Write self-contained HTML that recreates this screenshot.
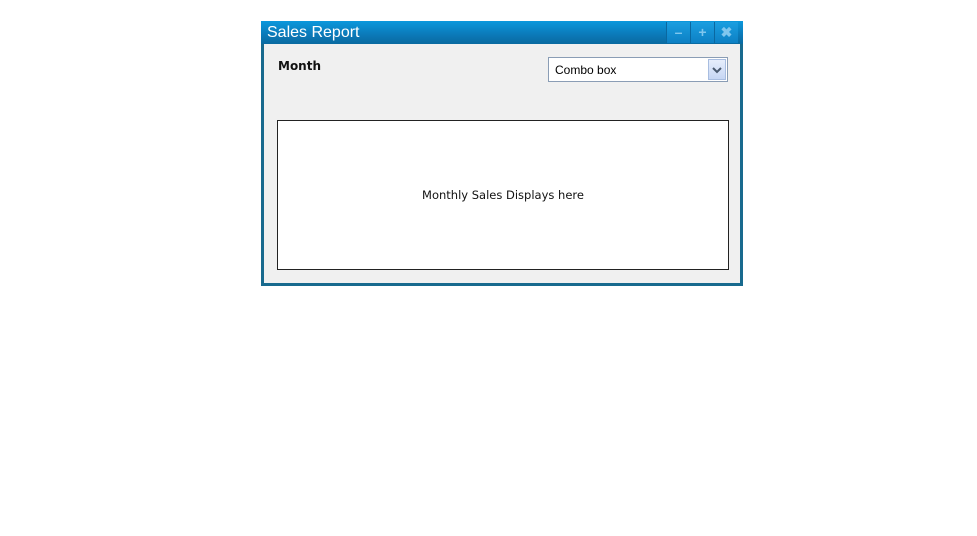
<!DOCTYPE html>
<html><head><style>
body{margin:0;width:977px;height:536px;background:#fff;position:relative;overflow:hidden;font-family:"Liberation Sans",sans-serif}
.win{position:absolute;left:261px;top:21px;width:476px;height:262px;border:3px solid #186a8e;border-top:none;background:#f0f0f0}
.title{position:absolute;left:-3px;top:0;width:482px;height:23px;background:linear-gradient(#0b98dc,#0b79b8 60%,#0a6aa0)}
.title span{position:absolute;left:6px;top:3px;color:#fff;font-size:16px}
.btn{position:absolute;top:1px;width:23px;height:21px;background:linear-gradient(#1a9ee0,#0d80c4);border-left:1px solid #0a68a0;color:#7fc6ee;font-weight:bold;text-align:center;font-size:14px;line-height:21px}
.hand{font-family:"Comic Sans MS","DejaVu Sans",sans-serif}
</style></head><body>
<div class="win">
<div class="title"><span>Sales Report</span>
<div class="btn" style="left:405px">&#8211;</div>
<div class="btn" style="left:429px">+</div>
<div class="btn" style="left:453px">&#10006;</div>
</div>
<div class="hand" style="position:absolute;left:14px;top:38px;font-size:12px;font-weight:bold;color:#111">Month</div>
<div style="position:absolute;left:284px;top:36px;width:178px;height:23px;border:1px solid #8a9db5;background:#fff">
<span style="position:absolute;left:6px;top:5px;font-size:12px">Combo box</span>
<div style="position:absolute;right:1px;top:1px;width:16px;height:19px;border:1px solid #a8bde0;background:linear-gradient(#e6eefc,#c6d6f4)">
<svg width="16" height="19"><path d="M4 8l4 4 4-4" stroke="#4a5a70" stroke-width="2" fill="none"/></svg></div>
</div>
<div style="position:absolute;left:13px;top:99px;width:450px;height:148px;border:1px solid #222;background:#fff">
<div class="hand" style="position:absolute;width:100%;top:67px;text-align:center;font-size:11.5px;color:#111">Monthly Sales Displays here</div>
</div>
</div>
</body></html>
